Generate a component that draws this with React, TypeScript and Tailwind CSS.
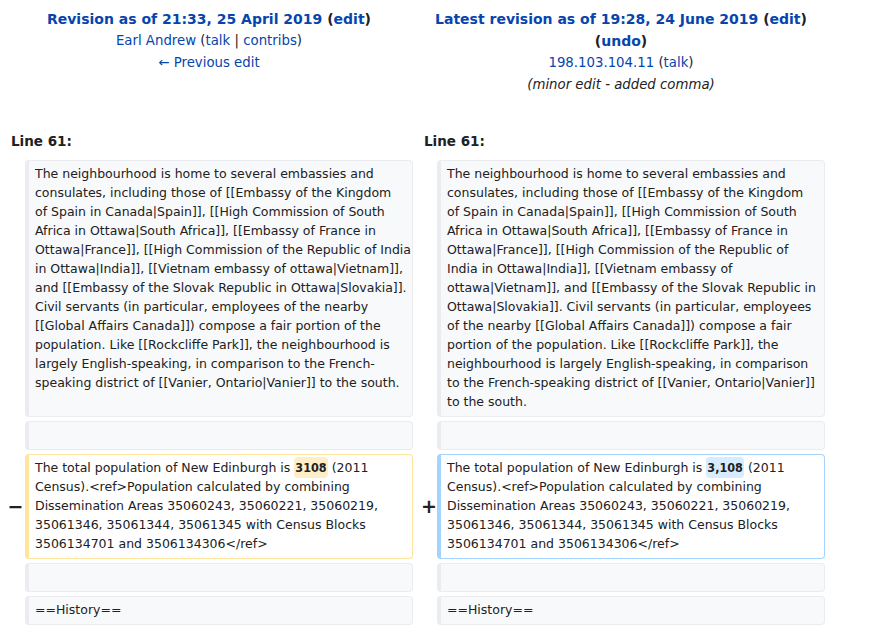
import React from "react";

const LINK = "text-[#0645ad]";

const leftLines = [
  "The neighbourhood is home to several embassies and",
  "consulates, including those of [[Embassy of the Kingdom",
  "of Spain in Canada|Spain]], [[High Commission of South",
  "Africa in Ottawa|South Africa]], [[Embassy of France in",
  "Ottawa|France]], [[High Commission of the Republic of India",
  "in Ottawa|India]], [[Vietnam embassy of ottawa|Vietnam]],",
  "and [[Embassy of the Slovak Republic in Ottawa|Slovakia]].",
  "Civil servants (in particular, employees of the nearby",
  "[[Global Affairs Canada]]) compose a fair portion of the",
  "population. Like [[Rockcliffe Park]], the neighbourhood is",
  "largely English-speaking, in comparison to the French-",
  "speaking district of [[Vanier, Ontario|Vanier]] to the south.",
];

const rightLines = [
  "The neighbourhood is home to several embassies and",
  "consulates, including those of [[Embassy of the Kingdom",
  "of Spain in Canada|Spain]], [[High Commission of South",
  "Africa in Ottawa|South Africa]], [[Embassy of France in",
  "Ottawa|France]], [[High Commission of the Republic of",
  "India in Ottawa|India]], [[Vietnam embassy of",
  "ottawa|Vietnam]], and [[Embassy of the Slovak Republic in",
  "Ottawa|Slovakia]]. Civil servants (in particular, employees",
  "of the nearby [[Global Affairs Canada]]) compose a fair",
  "portion of the population. Like [[Rockcliffe Park]], the",
  "neighbourhood is largely English-speaking, in comparison",
  "to the French-speaking district of [[Vanier, Ontario|Vanier]]",
  "to the south.",
];

const tailLines = [
  "Census).<ref>Population calculated by combining",
  "Dissemination Areas 35060243, 35060221, 35060219,",
  "35061346, 35061344, 35061345 with Census Blocks",
  "3506134701 and 3506134306</ref>",
];

function Lines({ lines }: { lines: string[] }) {
  return (
    <>
      {lines.map((l, i) => (
        <div key={i} className="whitespace-pre">
          {l}
        </div>
      ))}
    </>
  );
}

function Context({ children }: { children?: React.ReactNode }) {
  return (
    <div className="rounded-[4px] border border-l-4 border-[#eaecf0] bg-[#f8f9fa] px-[6px] pt-[3px] pb-[5px] min-h-[29px]">
      {children}
    </div>
  );
}

export default function App() {
  return (
    <div className="bg-white text-[#202122] w-[874px] h-[629px] overflow-hidden font-['DejaVu_Sans',sans-serif]">
      <div className="pl-[5px]">
        {/* header */}
        <div className="grid grid-cols-[408px_408px] gap-x-[4px] pt-[8px] text-[13.3px] leading-[22px] text-center">
          <div>
            <div className="text-[14px] font-bold">
              <span className={LINK}>Revision as of 21:33, 25 April 2019</span>{" "}
              (<span className={LINK}>edit</span>)
            </div>
            <div>
              <span className={LINK}>Earl Andrew</span> (
              <span className={LINK}>talk</span> |{" "}
              <span className={LINK}>contribs</span>)
            </div>
            <div>
              <span className={LINK}>← Previous edit</span>
            </div>
          </div>
          <div>
            <div className="text-[14px] font-bold">
              <span className={LINK}>Latest revision as of 19:28, 24 June 2019</span>{" "}
              (<span className={LINK}>edit</span>)
            </div>
            <div className="text-[14px] font-bold">
              (<span className={LINK}>undo</span>)
            </div>
            <div>
              <span className={LINK}>198.103.104.11</span> (
              <span className={LINK}>talk</span>)
            </div>
            <div className="italic">(minor edit - added comma)</div>
          </div>
        </div>

        {/* line numbers */}
        <div className="grid grid-cols-[408px_408px] gap-x-[4px] mt-[34px] text-[13.5px] font-bold leading-[22px]">
          <div className="pl-[6px]">Line 61:</div>
          <div className="pl-[7px]">Line 61:</div>
        </div>

        {/* diff rows */}
        <div className="grid grid-cols-[16px_388px_16px_388px] gap-x-[4px] gap-y-[4px] mt-[8px] text-[12.5px] leading-[19px]">
          <div />
          <Context>
            <Lines lines={leftLines} />
          </Context>
          <div />
          <Context>
            <Lines lines={rightLines} />
          </Context>

          <div />
          <Context />
          <div />
          <Context />

          <div className="flex items-center justify-center pl-[5px] text-[19px] font-bold text-[#202122]">
            −
          </div>
          <div className="rounded-[4px] border border-l-4 border-[#ffe49c] bg-white px-[6px] pt-[3px] pb-[5px]">
            <div className="whitespace-pre">
              The total population of New Edinburgh is{" "}
              <span className="rounded-[4px] bg-[#feeec8] px-[1px] py-[3px] font-bold font-['DejaVu_Sans_Condensed','DejaVu_Sans',sans-serif]">
                3108
              </span>{" "}
              (2011
            </div>
            <Lines lines={tailLines} />
          </div>
          <div className="flex items-center justify-center pl-[8px] text-[19px] font-bold text-[#202122]">
            +
          </div>
          <div className="rounded-[4px] border border-l-4 border-[#a3d3ff] bg-white px-[6px] pt-[3px] pb-[5px]">
            <div className="whitespace-pre">
              The total population of New Edinburgh is{" "}
              <span className="rounded-[4px] bg-[#d8ecff] px-[1px] py-[3px] font-bold font-['DejaVu_Sans_Condensed','DejaVu_Sans',sans-serif]">
                3,108
              </span>{" "}
              (2011
            </div>
            <Lines lines={tailLines} />
          </div>

          <div />
          <Context />
          <div />
          <Context />

          <div />
          <Context>==History==</Context>
          <div />
          <Context>==History==</Context>
        </div>
      </div>
    </div>
  );
}
